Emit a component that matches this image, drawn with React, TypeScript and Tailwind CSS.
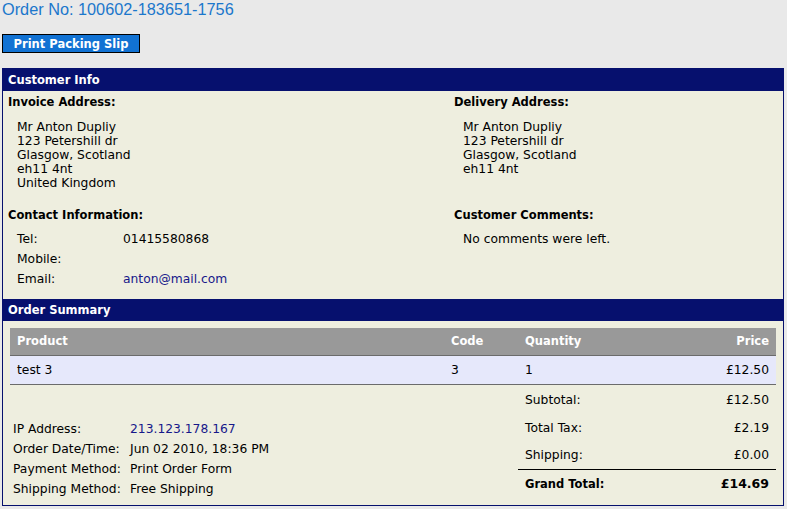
import React from "react";

const F = { fontFamily: "'DejaVu Sans', Verdana, sans-serif" };

export default function App() {
  return (
    <div className="w-[787px] h-[509px] bg-[#e9e9e9] text-black overflow-hidden" style={F}>
      <div className="pl-[2px] pt-[0px] text-[16.3px] leading-[18px] text-[#1b77cc] font-['Liberation_Sans',Arial,sans-serif]">
        Order No: 100602-183651-1756
      </div>
      <div className="pl-[2px] pt-[16px]">
        <button className="h-[19px] w-[138px] border border-black bg-[#1172d3] text-white font-bold text-[11.5px] leading-[17px] pt-[1px] flex items-center justify-center">
          Print Packing Slip
        </button>
      </div>
      <div className="ml-[2px] mt-[15px] w-[782px] border border-[#06106e] bg-[#eeeedf]">
        <div className="h-[22px] bg-[#06106e] text-white font-bold text-[11.5px] leading-[22px] pl-[5px]">Customer Info</div>
        <div className="grid grid-cols-[446px_1fr] text-[12.3px] leading-[14px]">
          <div className="pl-[5px] pt-[4px]">
            <div className="font-bold text-[11.5px] leading-[14px]">Invoice Address:</div>
            <div className="pl-[9px] pt-[11px]">
              <div>Mr Anton Dupliy</div>
              <div>123 Petershill dr</div>
              <div>Glasgow, Scotland</div>
              <div>eh11 4nt</div>
              <div>United Kingdom</div>
            </div>
          </div>
          <div className="pl-[5px] pt-[4px]">
            <div className="font-bold text-[11.5px] leading-[14px]">Delivery Address:</div>
            <div className="pl-[9px] pt-[11px]">
              <div>Mr Anton Dupliy</div>
              <div>123 Petershill dr</div>
              <div>Glasgow, Scotland</div>
              <div>eh11 4nt</div>
            </div>
          </div>
          <div className="pl-[5px] pt-[18px] pb-[10px]">
            <div className="font-bold text-[11.5px] leading-[14px]">Contact Information:</div>
            <div className="pl-[9px] pt-[7px] grid grid-cols-[106px_1fr] auto-rows-[20px] items-center">
              <div>Tel:</div>
              <div>01415580868</div>
              <div>Mobile:</div>
              <div></div>
              <div>Email:</div>
              <div className="text-[#17188a]">anton@mail.com</div>
            </div>
          </div>
          <div className="pl-[5px] pt-[18px]">
            <div className="font-bold text-[11.5px] leading-[14px]">Customer Comments:</div>
            <div className="pl-[9px] pt-[7px] h-[27px] flex items-center">No comments were left.</div>
          </div>
        </div>
        <div className="h-[22px] bg-[#06106e] text-white font-bold text-[11.5px] leading-[22px] pl-[5px]">Order Summary</div>
        <div className="px-[7px] pt-[7px] pb-[6px] text-[12.3px]">
          <div className="grid grid-cols-[434px_74px_1fr_1fr] h-[28px] items-center bg-[#999999] text-white font-bold text-[11.5px] border-b border-[#6b6b6b]">
            <div className="pl-[7px]">Product</div>
            <div className="pl-[7px]">Code</div>
            <div className="pl-[7px]">Quantity</div>
            <div className="pr-[7px] text-right">Price</div>
          </div>
          <div className="grid grid-cols-[434px_74px_1fr_1fr] h-[29px] items-center bg-[#e6e8fb] border-b border-[#6b6b6b]">
            <div className="pl-[7px]">test 3</div>
            <div className="pl-[7px]">3</div>
            <div className="pl-[7px]">1</div>
            <div className="pr-[7px] text-right">£12.50</div>
          </div>
          <div className="flex">
            <div className="w-[508px] flex flex-col justify-end pl-[3px]">
              <div className="grid grid-cols-[117px_1fr] auto-rows-[20px] items-center">
                <div>IP Address:</div>
                <div className="text-[#17188a]">213.123.178.167</div>
                <div>Order Date/Time:</div>
                <div>Jun 02 2010, 18:36 PM</div>
                <div>Payment Method:</div>
                <div>Print Order Form</div>
                <div>Shipping Method:</div>
                <div>Free Shipping</div>
              </div>
            </div>
            <div className="flex-1 pt-[1px]">
              <div className="flex justify-between items-center h-[28px] px-[7px]"><span>Subtotal:</span><span>£12.50</span></div>
              <div className="flex justify-between items-center h-[28px] px-[7px]"><span>Total Tax:</span><span>£2.19</span></div>
              <div className="flex justify-between items-center h-[28px] px-[7px] border-b border-black"><span>Shipping:</span><span>£0.00</span></div>
              <div className="flex justify-between items-center h-[29px] px-[7px] font-bold text-[11.5px]"><span>Grand Total:</span><span className="text-[12.5px]">£14.69</span></div>
            </div>
          </div>
        </div>
      </div>
    </div>
  );
}
